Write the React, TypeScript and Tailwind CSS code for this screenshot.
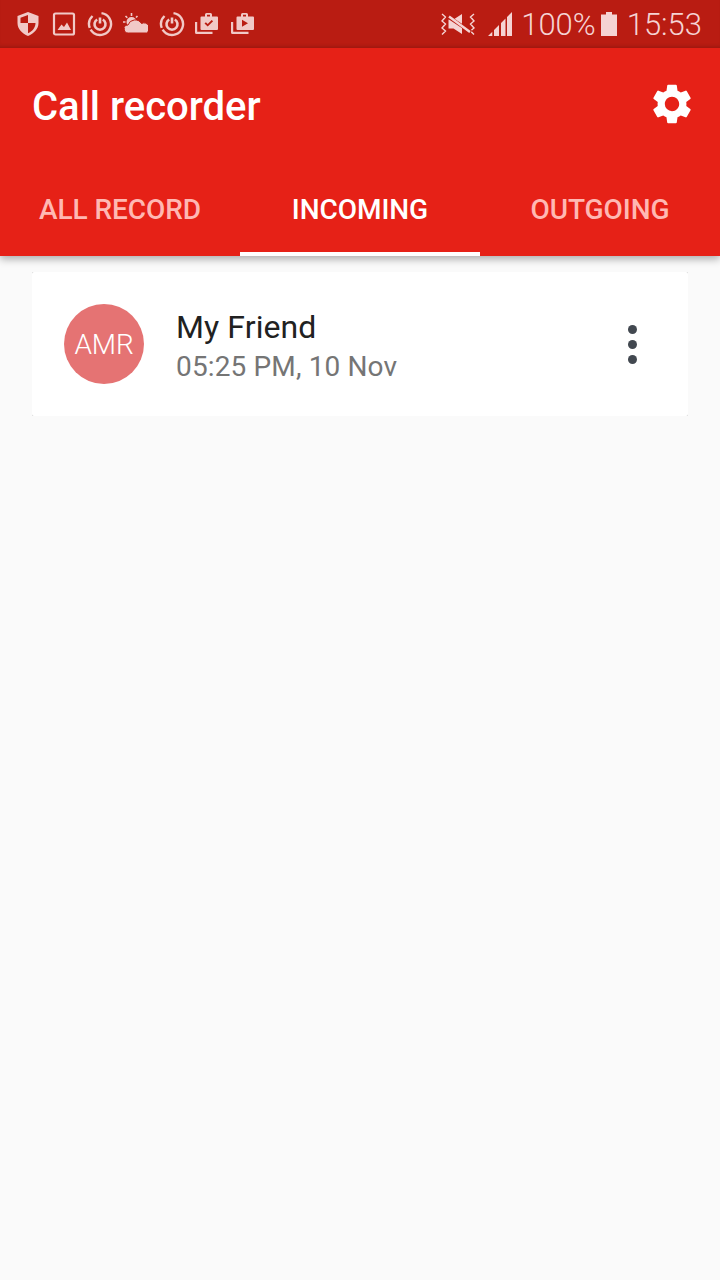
function RingIcon({ className }: { className?: string }) {
  return (
    <svg width="26" height="26" viewBox="0 0 26 26" className={className} fill="none" stroke="currentColor">
      <path d="M14.500 2.100A11 11 0 1 1 5.500 5" strokeWidth="2.400" strokeDasharray="44 2 30" />
      <path d="M10.200 8.500A5.500 5.500 0 1 0 15.800 8.500" strokeWidth="2.600" />
      <path d="M13 6.500v6" strokeWidth="2.600" />
    </svg>
  );
}

function StatusIcons() {
  return (
    <div className="flex items-center gap-[12px] text-[#f1c9c7]">
      <svg width="24" height="26" viewBox="0 0 24 26" fill="none">
        <path fillRule="evenodd" d="M12 1 22.500 5V12c0 6-4.500 10.500-10.500 13C6 22.500 1.500 18 1.500 12V5Z M12 4 4.500 6.800V12h7.500Z M12 12v10.300c4.300-1.900 7.500-5.700 7.500-10.300Z" fill="currentColor" />
      </svg>
      <svg width="24" height="26" viewBox="0 0 24 26" fill="none">
        <rect x="2" y="2.500" width="20" height="21" rx="1.500" stroke="currentColor" strokeWidth="2.200" />
        <path d="M5.500 19 9.500 13.500 12 16 15 11.500 19 19Z" fill="currentColor" />
      </svg>
      <RingIcon className="ml-[-1px]" />
      <svg width="26" height="26" viewBox="0 0 26 26" className="ml-[-3px]" fill="none">
        <circle cx="9.500" cy="11" r="5" fill="currentColor" />
        <path d="M6.500 22a4 4 0 0 1-.5-8 7.500 7.500 0 0 1 13.500-1.500 5 5 0 0 1 5 9.500Z" fill="currentColor" stroke="#b91c12" strokeWidth="1" />
        <path d="M9.500 2v3M1 11h2.500M3.500 5l1.800 1.800M15.500 5 14 6.500M3 17l1.500-1.500" stroke="currentColor" strokeWidth="1.600" />
      </svg>
      <RingIcon className="ml-[-1px]" />
      <svg width="26" height="26" viewBox="0 0 26 26" className="ml-[-3px]" fill="none">
        <path d="M1 11v10.500A1.500 1.500 0 0 0 2.500 23h16v-2.200H3.200V11Z" fill="currentColor" />
        <path fillRule="evenodd" d="M7.500 5.500H11V3.500A1.500 1.500 0 0 1 12.500 2h4A1.500 1.500 0 0 1 18 3.500v2h5a1 1 0 0 1 1 1v11.500a1 1 0 0 1-1 1H7.500a1 1 0 0 1-1-1V6.500a1 1 0 0 1 1-1Z M13 3.800v1.700h3V3.800Z M10.500 12.500l1.400-1.300 1.800 1.800 4-4 1.400 1.300-5.400 5.300Z" fill="currentColor" />
      </svg>
      <svg width="26" height="26" viewBox="0 0 26 26" className="ml-[-2px]" fill="none">
        <path d="M1 11v10.500A1.500 1.500 0 0 0 2.500 23h16v-2.200H3.200V11Z" fill="currentColor" />
        <path fillRule="evenodd" d="M7.500 5.500H11V3.500A1.500 1.500 0 0 1 12.500 2h4A1.500 1.500 0 0 1 18 3.500v2h5a1 1 0 0 1 1 1v11.500a1 1 0 0 1-1 1H7.500a1 1 0 0 1-1-1V6.500a1 1 0 0 1 1-1Z M13 3.800v1.700h3V3.800Z M12 8.800v7l6-3.500Z" fill="currentColor" />
      </svg>
    </div>
  );
}

function RightStatus() {
  return (
    <div className="flex items-center text-[#f5d3d3]">
      <svg width="38" height="26" viewBox="0 0 38 26" fill="none">
        <path d="M3 3 6.500 6 3 10 6.500 13 3 17 6.500 20 3 23.500M35 3 31.500 6 35 10 31.500 13 35 17 31.500 20 35 23.500" stroke="currentColor" strokeWidth="1.400" />
        <path d="M9.500 8.500h5L23 3v20l-8.500-5.500h-5Z" fill="currentColor" />
        <path d="M8 5 32 21" stroke="#b91c12" strokeWidth="3.500" />
        <path d="M10 5.500 31 21" stroke="currentColor" strokeWidth="2.400" />
      </svg>
      <svg width="24" height="24" viewBox="0 0 24 24" className="ml-[11px]" fill="currentColor">
        <path d="M0 24 4.300 19.700V24ZM6 24V18L11 13V24ZM13 24V11L17.500 6.500V24ZM19 24V5L24 0V24Z" />
      </svg>
      <span className="ml-[9px] pt-[1px] text-[31px] leading-[36px] font-light">100%</span>
      <svg width="16" height="24" viewBox="0 0 16 24" className="ml-[5px]" fill="currentColor">
        <path d="M5 0h6v2.500h5V24H0V2.500h5Z" />
      </svg>
      <span className="ml-[10px] pt-[1px] text-[31px] leading-[36px] font-light">15:53</span>
    </div>
  );
}

export default function App() {
  return (
    <div className="flex min-h-[1280px] w-[720px] flex-col bg-[#fafafa] font-['Roboto',sans-serif]">
      <div className="relative z-10 bg-[#e62117] shadow-[0_3px_8px_rgba(0,0,0,0.32)]">
        <div className="flex h-[48px] items-center justify-between bg-[#b91c12] pl-[16px] pr-[18px] shadow-[inset_0_-4px_4px_-3px_rgba(0,0,0,0.2)]">
          <StatusIcons />
          <RightStatus />
        </div>
        <div className="flex h-[112px] items-center justify-between pl-[32px] pr-[24px]">
          <span className="mt-[6px] text-[40px] leading-[48px] font-medium text-white">Call recorder</span>
          <svg width="48" height="48" viewBox="0 0 24 24" fill="white">
            <path d="M19.140 12.940c.04-.300.060-.610.060-.940 0-.320-.020-.640-.070-.940l2.030-1.580a.49.490 0 0 0 .12-.610l-1.920-3.320a.488.488 0 0 0-.590-.220l-2.390.960c-.500-.380-1.030-.700-1.620-.940l-.360-2.540a.484.484 0 0 0-.480-.410h-3.840c-.240 0-.430.170-.470.410l-.360 2.540c-.590.240-1.130.570-1.620.940l-2.390-.960c-.220-.080-.470 0-.590.220L2.740 8.870c-.120.210-.080.470.120.610l2.030 1.580c-.050.300-.090.630-.090.940s.020.640.070.940l-2.030 1.580a.49.490 0 0 0-.120.610l1.920 3.320c.120.220.370.290.590.220l2.390-.960c.500.380 1.030.700 1.620.940l.360 2.540c.050.240.240.410.480.410h3.840c.240 0 .440-.170.470-.410l.360-2.540c.590-.240 1.130-.560 1.620-.940l2.390.960c.220.080.470 0 .590-.220l1.920-3.320c.120-.220.070-.470-.120-.610l-2.010-1.580ZM12 15.600A3.610 3.610 0 0 1 8.400 12c0-1.980 1.620-3.600 3.600-3.600s3.600 1.620 3.600 3.600-1.620 3.600-3.600 3.600Z" />
          </svg>
        </div>
        <div className="flex h-[96px]">
          {[
            ["ALL RECORD", false],
            ["INCOMING", true],
            ["OUTGOING", false],
          ].map(([label, active]) => (
            <div
              key={label as string}
              className={`flex w-[240px] items-center justify-center border-b-[4px] pt-[8px] text-[28px] font-medium tracking-[-0.05px] ${
                active ? "border-white text-white" : "border-transparent text-[#ffb8b3]"
              }`}
            >
              {label}
            </div>
          ))}
        </div>
      </div>
      <div className="px-[32px] pt-[16px]">
        <div className="bg-[#d4d4d4]">
          <div className="flex h-[144px] items-center rounded-[2px] bg-white pl-[32px] pr-[32px]">
            <div className="flex h-[80px] w-[80px] shrink-0 items-center justify-center rounded-full bg-[#e57373] pt-[2px] text-[28px] font-light tracking-[-0.1px] text-white">
              AMR
            </div>
            <div className="ml-[32px] mt-[7px] flex flex-1 flex-col">
              <span className="text-[32px] leading-[38px] tracking-[0.1px] text-[#212121]">My Friend</span>
              <span className="mt-[1px] text-[28px] leading-[40px] tracking-[0.14px] text-[#757575]">05:25 PM, 10 Nov</span>
            </div>
            <div className="mr-[19px] flex flex-col gap-[6px]">
              <span className="h-[9px] w-[9px] rounded-full bg-[#424850]" />
              <span className="h-[9px] w-[9px] rounded-full bg-[#424850]" />
              <span className="h-[9px] w-[9px] rounded-full bg-[#424850]" />
            </div>
          </div>
        </div>
      </div>
    </div>
  );
}
